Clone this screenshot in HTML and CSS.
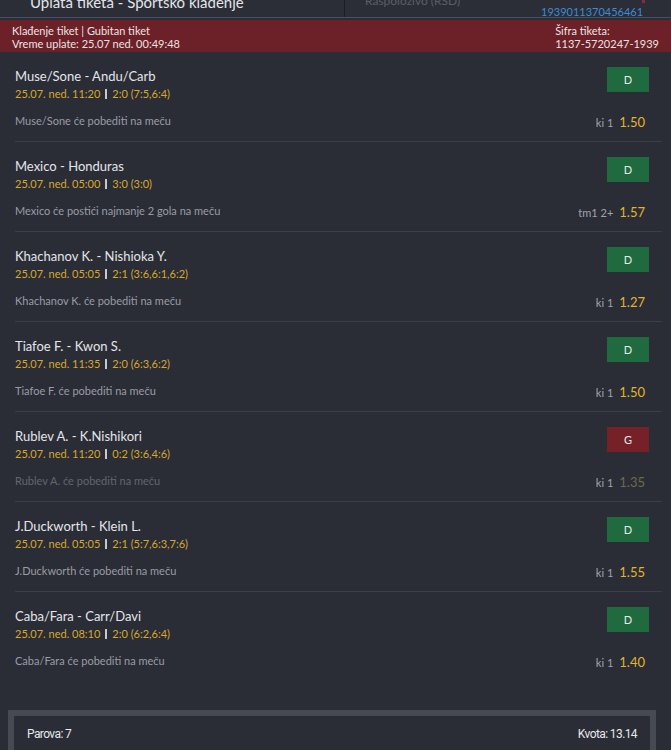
FILE: index.html
```html
<!DOCTYPE html>
<html lang="sr">
<head>
  <meta charset="UTF-8">
  <title>Tiket - Sportsko klađenje</title>
  <link rel="stylesheet" href="styles.css">
</head>
<body>

  <div class="topbar">
    <div class="topbar-left">
      <span class="topbar-title">Uplata tiketa - Sportsko klađenje</span>
    </div>
    <div class="topbar-right">
      <span class="topbar-label">Raspoloživo (RSD)</span>
      <span class="topbar-code">1939011370456461</span>
      <span class="topbar-mark"></span>
    </div>
  </div>

  <div class="banner">
    <div>
      <div>Klađenje tiket | Gubitan tiket</div>
      <div>Vreme uplate: 25.07 ned. 00:49:48</div>
    </div>
    <div>
      <div>Šifra tiketa:</div>
      <div>1137-5720247-1939</div>
    </div>
  </div>

  <div class="list">
    <div class="row">
      <div class="row-main">
        <div class="match">Muse/Sone - Andu/Carb</div>
        <div class="time">25.07. ned. 11:20<span class="bar"></span>2:0 (7:5,6:4)</div>
        <div class="pick">Muse/Sone će pobediti na meču</div>
      </div>
      <div class="row-side">
        <div class="badge win">D</div>
        <div class="odd"><span class="type">ki 1</span><span class="val">1.50</span></div>
      </div>
    </div>

    <div class="row">
      <div class="row-main">
        <div class="match">Mexico - Honduras</div>
        <div class="time">25.07. ned. 05:00<span class="bar"></span>3:0 (3:0)</div>
        <div class="pick">Mexico će postići najmanje 2 gola na meču</div>
      </div>
      <div class="row-side">
        <div class="badge win">D</div>
        <div class="odd"><span class="type">tm1 2+</span><span class="val">1.57</span></div>
      </div>
    </div>

    <div class="row">
      <div class="row-main">
        <div class="match">Khachanov K. - Nishioka Y.</div>
        <div class="time">25.07. ned. 05:05<span class="bar"></span>2:1 (3:6,6:1,6:2)</div>
        <div class="pick">Khachanov K. će pobediti na meču</div>
      </div>
      <div class="row-side">
        <div class="badge win">D</div>
        <div class="odd"><span class="type">ki 1</span><span class="val">1.27</span></div>
      </div>
    </div>

    <div class="row">
      <div class="row-main">
        <div class="match">Tiafoe F. - Kwon S.</div>
        <div class="time">25.07. ned. 11:35<span class="bar"></span>2:0 (6:3,6:2)</div>
        <div class="pick">Tiafoe F. će pobediti na meču</div>
      </div>
      <div class="row-side">
        <div class="badge win">D</div>
        <div class="odd"><span class="type">ki 1</span><span class="val">1.50</span></div>
      </div>
    </div>

    <div class="row lost">
      <div class="row-main">
        <div class="match">Rublev A. - K.Nishikori</div>
        <div class="time">25.07. ned. 11:20<span class="bar"></span>0:2 (3:6,4:6)</div>
        <div class="pick">Rublev A. će pobediti na meču</div>
      </div>
      <div class="row-side">
        <div class="badge loss">G</div>
        <div class="odd"><span class="type">ki 1</span><span class="val">1.35</span></div>
      </div>
    </div>

    <div class="row">
      <div class="row-main">
        <div class="match">J.Duckworth - Klein L.</div>
        <div class="time">25.07. ned. 05:05<span class="bar"></span>2:1 (5:7,6:3,7:6)</div>
        <div class="pick">J.Duckworth će pobediti na meču</div>
      </div>
      <div class="row-side">
        <div class="badge win">D</div>
        <div class="odd"><span class="type">ki 1</span><span class="val">1.55</span></div>
      </div>
    </div>

    <div class="row">
      <div class="row-main">
        <div class="match">Caba/Fara - Carr/Davi</div>
        <div class="time">25.07. ned. 08:10<span class="bar"></span>2:0 (6:2,6:4)</div>
        <div class="pick">Caba/Fara će pobediti na meču</div>
      </div>
      <div class="row-side">
        <div class="badge win">D</div>
        <div class="odd"><span class="type">ki 1</span><span class="val">1.40</span></div>
      </div>
    </div>
  </div>

  <div class="summary">
    <span>Parova: 7</span>
    <span>Kvota: 13.14</span>
  </div>

</body>
</html>
```

FILE: styles.css
```css
body {
  margin: 0;
  background-color: #2a2d36;
  color: #e2e3e6;
  font-family: Lato, "Open Sans", sans-serif;
  height: 750px;
  overflow: hidden;
}

/* top bar, cut off by the screenshot */
.topbar {
  display: flex;
  height: 17px;
  overflow: hidden;
  background-color: #2b2e37;
  border-bottom: 1px solid #44526a;
  white-space: nowrap;
}
.topbar-left {
  width: 345px;
  border-right: 1px solid #1c1e24;
  padding-left: 30px;
  box-sizing: border-box;
}
.topbar-title {
  display: block;
  margin-top: -6px;
  font-size: 15px;
  line-height: 16px;
  color: #e4e5e8;
}
.topbar-right {
  flex: 1;
  display: flex;
  padding-left: 20px;
  position: relative;
}
.topbar-label {
  display: block;
  width: 176px;
  margin-top: -7px;
  font-size: 12px;
  line-height: 16px;
  color: #5a5e68;
}
.topbar-code {
  margin-top: 5px;
  font-size: 11px;
  line-height: 13px;
  color: #3d8bd0;
}
.topbar-mark {
  position: absolute;
  left: 297px;
  top: 0;
  width: 3px;
  height: 3px;
  background-color: #8a2a3a;
}

.banner {
  display: flex;
  justify-content: space-between;
  margin-top: 2px;
  height: 32px;
  padding: 4px 12px 0 12px;
  box-sizing: border-box;
  background-color: #6c2027;
  color: #ece4e4;
  font-size: 11px;
  line-height: 13px;
}

.list {
  padding: 0 9px 0 15px;
}
.row {
  display: flex;
  justify-content: space-between;
  height: 89px;
  border-bottom: 1px solid #3b3e47;
}
.row:last-child {
  border-bottom: none;
}
.row-main {
  padding-top: 16px;
}
.match {
  font-size: 13px;
  line-height: 16px;
  color: #e4e5e8;
}
.time {
  margin-top: 2px;
  font-size: 11px;
  line-height: 16px;
  color: #d8a82c;
}
.bar {
  display: inline-block;
  width: 2px;
  height: 10px;
  margin: 0 5px;
  background-color: #c8c9cd;
  vertical-align: -1px;
}
.pick {
  margin-top: 11px;
  font-size: 11px;
  line-height: 16px;
  color: #9a9ca4;
}
.row-side {
  display: flex;
  flex-direction: column;
  align-items: flex-end;
  padding-top: 15px;
  padding-right: 13px;
}
.badge {
  width: 42px;
  height: 25px;
  line-height: 25px;
  text-align: center;
  font-size: 11px;
  color: #e8ece8;
}
.badge.win {
  background-color: #1f6a3e;
}
.badge.loss {
  background-color: #762127;
}
.odd {
  margin-top: 21px;
  margin-right: 4px;
  line-height: 16px;
}
.type {
  font-size: 11px;
  color: #a2a3a8;
  margin-right: 6px;
}
.val {
  font-size: 13px;
  color: #e3b42a;
}
.lost .pick {
  color: #62656e;
}
.lost .val {
  color: #6c6a4c;
}

.summary {
  display: flex;
  justify-content: space-between;
  margin: 29px 15px 0 8px;
  height: 60px;
  padding: 11px 13px 0 13px;
  box-sizing: border-box;
  border: 6px solid #474a53;
  font-family: Roboto, sans-serif;
  font-size: 12px;
  letter-spacing: -0.6px;
  color: #e6e7ea;
}
```
